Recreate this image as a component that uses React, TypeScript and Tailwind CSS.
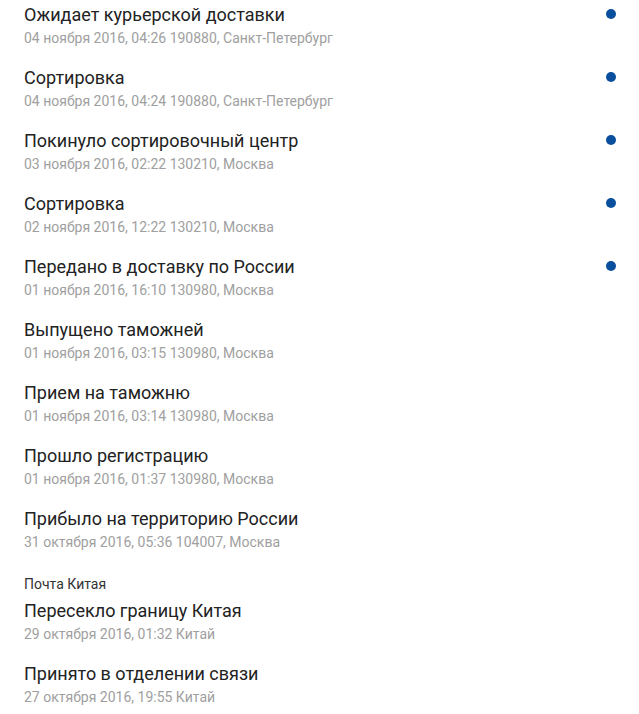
import React from "react";

type Ev = { title: string; date: string; dot?: boolean };

const russia: Ev[] = [
  { title: "Ожидает курьерской доставки", date: "04 ноября 2016, 04:26 190880, Санкт-Петербург", dot: true },
  { title: "Сортировка", date: "04 ноября 2016, 04:24 190880, Санкт-Петербург", dot: true },
  { title: "Покинуло сортировочный центр", date: "03 ноября 2016, 02:22 130210, Москва", dot: true },
  { title: "Сортировка", date: "02 ноября 2016, 12:22 130210, Москва", dot: true },
  { title: "Передано в доставку по России", date: "01 ноября 2016, 16:10 130980, Москва", dot: true },
  { title: "Выпущено таможней", date: "01 ноября 2016, 03:15 130980, Москва" },
  { title: "Прием на таможню", date: "01 ноября 2016, 03:14 130980, Москва" },
  { title: "Прошло регистрацию", date: "01 ноября 2016, 01:37 130980, Москва" },
  { title: "Прибыло на территорию России", date: "31 октября 2016, 05:36 104007, Москва" },
];

const china: Ev[] = [
  { title: "Пересекло границу Китая", date: "29 октября 2016, 01:32 Китай" },
  { title: "Принято в отделении связи", date: "27 октября 2016, 19:55 Китай" },
];

function Item({ ev }: { ev: Ev }) {
  return (
    <li className="h-[63px]">
      <div className="flex items-center justify-between">
        <p className="text-[18px] leading-[24px] text-[#222]">{ev.title}</p>
        {ev.dot && <span className="mr-[23px] -mt-[2px] h-[10px] w-[10px] rounded-full bg-[#0a4f9e]" />}
      </div>
      <p className="mt-px text-[14px] leading-[20px] text-[#a0a0a0]">{ev.date}</p>
    </li>
  );
}

export default function App() {
  return (
    <main className="min-h-screen bg-white pl-6 pt-[3px] font-['Roboto',sans-serif]">
      <ul>
        {russia.map((ev, i) => (
          <Item key={i} ev={ev} />
        ))}
      </ul>
      <p className="mt-[5px] text-[14px] leading-[18px] text-[#333]">Почта Китая</p>
      <ul className="mt-[6px]">
        {china.map((ev, i) => (
          <Item key={i} ev={ev} />
        ))}
      </ul>
    </main>
  );
}
